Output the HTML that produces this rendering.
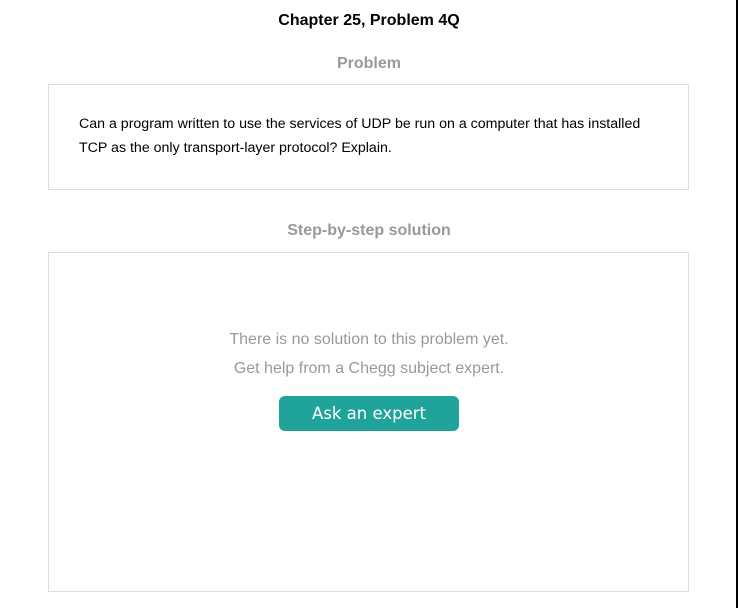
<!DOCTYPE html>
<html><head><style>
body{margin:0;width:738px;height:608px;background:#fff;font-family:"Liberation Sans",Arial,sans-serif;position:relative;overflow:hidden}
.a{position:absolute}
.edge{left:736px;top:0;width:2px;height:608px;background:#000}
.t{left:0;width:738px;text-align:center}
.box{border:1px solid #ddd;box-sizing:border-box;left:48px;width:641px}
</style></head><body>
<div class="a edge"></div>
<div class="a t" style="top:12px;font-size:16px;font-weight:bold;color:#000">Chapter 25, Problem 4Q</div>
<div class="a t" style="top:55px;font-size:16px;font-weight:bold;color:#999">Problem</div>
<div class="a box" style="top:84px;height:106px"></div>
<div class="a" style="left:79px;top:112px;font-size:14.2px;line-height:24px;color:#000;width:575px">Can a program written to use the services of UDP be run on a computer that has installed TCP as the only transport-layer protocol? Explain.</div>
<div class="a t" style="top:222px;font-size:16px;font-weight:bold;color:#999">Step-by-step solution</div>
<div class="a box" style="top:252px;height:340px"></div>
<div class="a t" style="top:331px;font-size:16px;color:#999">There is no solution to this problem yet.</div>
<div class="a t" style="top:360px;font-size:16px;color:#999">Get help from a Chegg subject expert.</div>
<div class="a" style="left:279px;top:396px;width:180px;height:35px;background:#20a39a;border-radius:6px;color:#fff;font-family:'DejaVu Sans',sans-serif;font-size:16.5px;line-height:36px;text-align:center">Ask an expert</div>
</body></html>
